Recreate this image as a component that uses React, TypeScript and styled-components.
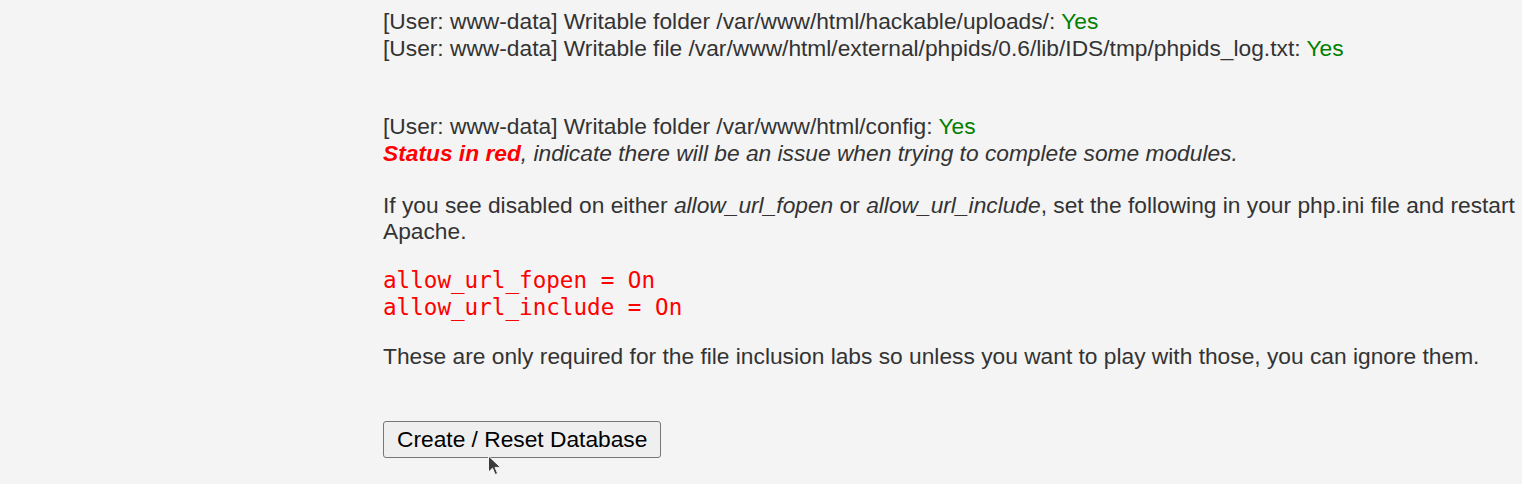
import React from "react";
import styled, { createGlobalStyle } from "styled-components";

const Global = createGlobalStyle`
  html, body { margin: 0; padding: 0; background: #f4f4f4; }
  body { font-family: "Liberation Sans", Arial, sans-serif; color: #333; }
`;

const Page = styled.div`
  padding: 8px 0 0 383px;
  width: 1139px;
  font-size: 22.75px;
  line-height: 27px;
  position: relative;
  height: 476px;
  overflow: hidden;
`;

const Block = styled.div<{ $gap?: number; $lh?: number }>`
  margin-top: ${(p) => p.$gap ?? 0}px;
  line-height: ${(p) => p.$lh ?? 27}px;
`;

const Yes = styled.span`
  color: #008000;
`;

const Red = styled.em`
  color: #ff0000;
  font-weight: bold;
`;

const Pre = styled.pre`
  margin: 23px 0 0;
  font-family: "DejaVu Sans Mono", monospace;
  font-size: 22.6px;
  line-height: 27px;
  color: #ff0000;
`;

const Button = styled.button`
  margin-top: 51px;
  height: 37px;
  font-family: "Liberation Sans", Arial, sans-serif;
  font-size: 22.75px;
  color: #000;
  background: #efefef;
  border: 1px solid #767676;
  border-radius: 3px;
  padding: 0 13px;
`;

const Cursor = styled.svg`
  position: absolute;
  left: 487px;
  top: 455px;
`;

export default function App() {
  return (
    <>
      <Global />
      <Page>
        <Block>
          [User: www-data] Writable folder /var/www/html/hackable/uploads/: <Yes>Yes</Yes>
          <br />
          [User: www-data] Writable file /var/www/html/external/phpids/0.6/lib/IDS/tmp/phpids_log.txt: <Yes>Yes</Yes>
        </Block>
        <Block $gap={51}>
          [User: www-data] Writable folder /var/www/html/config: <Yes>Yes</Yes>
          <br />
          <i>
            <Red>Status in red</Red>, indicate there will be an issue when trying to complete some modules.
          </i>
        </Block>
        <Block $gap={25} $lh={26}>
          If you see disabled on either <i>allow_url_fopen</i> or <i>allow_url_include</i>, set the following in your php.ini file and restart Apache.
        </Block>
        <Pre>{"allow_url_fopen = On\nallow_url_include = On"}</Pre>
        <Block $gap={22}>
          These are only required for the file inclusion labs so unless you want to play with those, you can ignore them.
        </Block>
        <Button>Create / Reset Database</Button>
        <Cursor width="16" height="22" viewBox="0 0 16 22">
          <path d="M1.5 1 L1.5 17 L5.5 13.2 L8.2 19.5 L10.6 18.5 L8 12.4 L13.5 12.4 Z" fill="#3a3a3a" stroke="#f4f4f4" strokeWidth="1" strokeLinejoin="round" />
        </Cursor>
      </Page>
    </>
  );
}
